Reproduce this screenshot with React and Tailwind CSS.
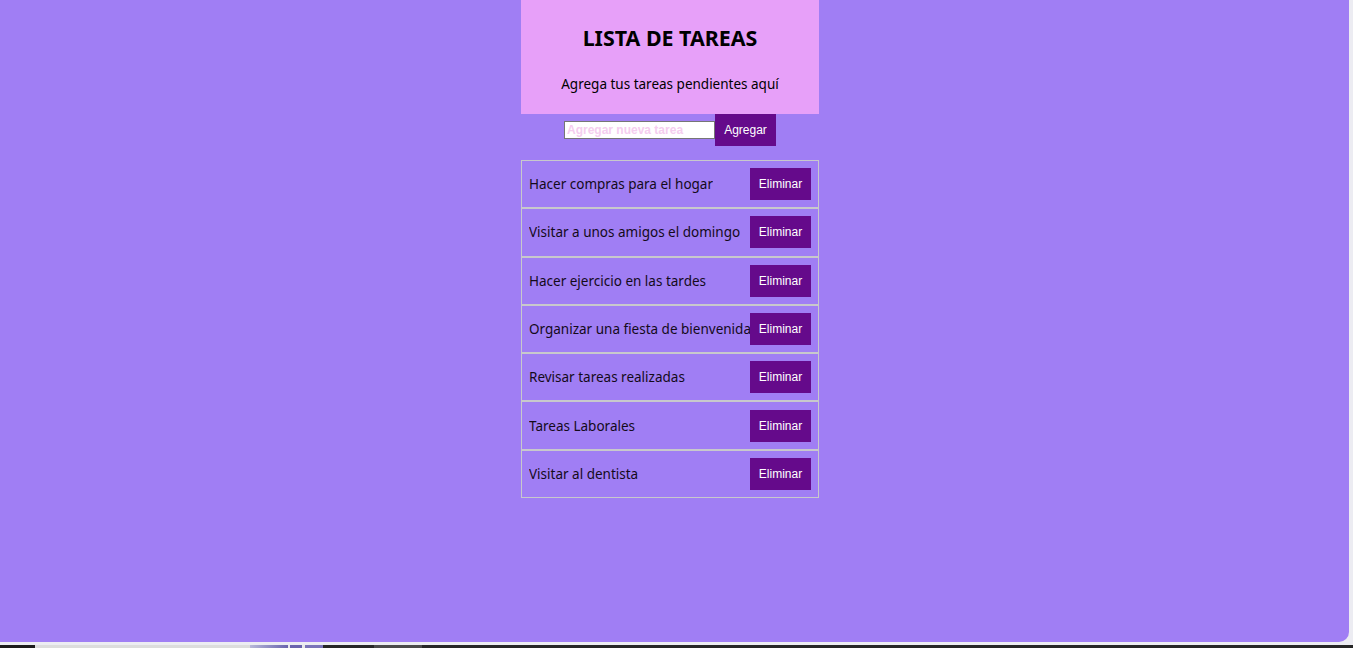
import React, { useState } from "react";

const initial = [
  "Hacer compras para el hogar",
  "Visitar a unos amigos el domingo",
  "Hacer ejercicio en las tardes",
  "Organizar una fiesta de bienvenida",
  "Revisar tareas realizadas",
  "Tareas Laborales",
  "Visitar al dentista",
];

export default function App() {
  const [tasks, setTasks] = useState(initial);
  const [text, setText] = useState("");
  const add = () => {
    if (text.trim()) {
      setTasks([...tasks, text.trim()]);
      setText("");
    }
  };
  return (
    <div className="w-[1353px] h-[648px] bg-[#ececf2] flex flex-col overflow-hidden">
      <div className="flex flex-1">
        <div className="w-[1349px] h-[642px] bg-[#a07ef4] rounded-br-[10px] flex" style={{ fontFamily: '"Noto Sans", sans-serif' }}>
          <div className="w-[1340px] flex flex-col items-center">
            <div className="w-[298px] h-[114px] bg-[#e7a0f9] flex flex-col items-center">
              <h1 className="mt-[24px] text-[21.4px] leading-[28px] font-bold text-black">LISTA DE TAREAS</h1>
              <p className="mt-[22px] text-[13.5px] leading-[20px] text-black">Agrega tus tareas pendientes aquí</p>
            </div>
            <div className="flex items-center">
              <input
                value={text}
                onChange={(e) => setText(e.target.value)}
                placeholder="Agregar nueva tarea"
                className="w-[151px] h-[18px] bg-white border border-[#767676] px-[2px] text-[12px] font-bold placeholder:text-[#f5cdef] outline-none"
                style={{ fontFamily: '"Liberation Sans", Arial, sans-serif' }}
              />
              <button
                onClick={add}
                className="w-[61px] h-[32px] bg-[#650a8b] text-white text-[12px]"
                style={{ fontFamily: '"Liberation Sans", Arial, sans-serif' }}
              >
                Agregar
              </button>
            </div>
            <ul className="mt-[14px] w-[298px] flex flex-col">
              {tasks.map((t, i) => (
                <li key={i} className="h-[48.3px] border border-[#c8c8cc] px-[7px] flex items-center justify-between">
                  <span className="min-w-0 overflow-hidden text-[13.5px] text-[#140a1a] whitespace-nowrap">{t}</span>
                  <button
                    onClick={() => setTasks(tasks.filter((_, j) => j !== i))}
                    className="w-[61px] h-[32px] shrink-0 bg-[#650a8b] text-white text-[12px]"
                    style={{ fontFamily: '"Liberation Sans", Arial, sans-serif' }}
                  >
                    Eliminar
                  </button>
                </li>
              ))}
            </ul>
          </div>
        </div>
        <div className="flex-1" />
      </div>
      <div className="h-[3px] mt-[3px] flex">
        <div className="w-[35px] bg-[#1c1c1c]" />
        <div className="w-[215px] bg-[#dcdcdc]" />
        <div className="w-[38px] bg-gradient-to-r from-[#b8b8d8] to-[#6a64ad]" />
        <div className="w-[2px] bg-[#e8e8e8]" />
        <div className="w-[12px] bg-[#6a64ad]" />
        <div className="w-[3px] bg-[#e8e8e8]" />
        <div className="w-[18px] bg-[#7a74b8]" />
        <div className="w-[51px] bg-[#262626]" />
        <div className="w-[48px] bg-[#4a4a4a]" />
        <div className="flex-1 bg-[#262626]" />
      </div>
    </div>
  );
}
